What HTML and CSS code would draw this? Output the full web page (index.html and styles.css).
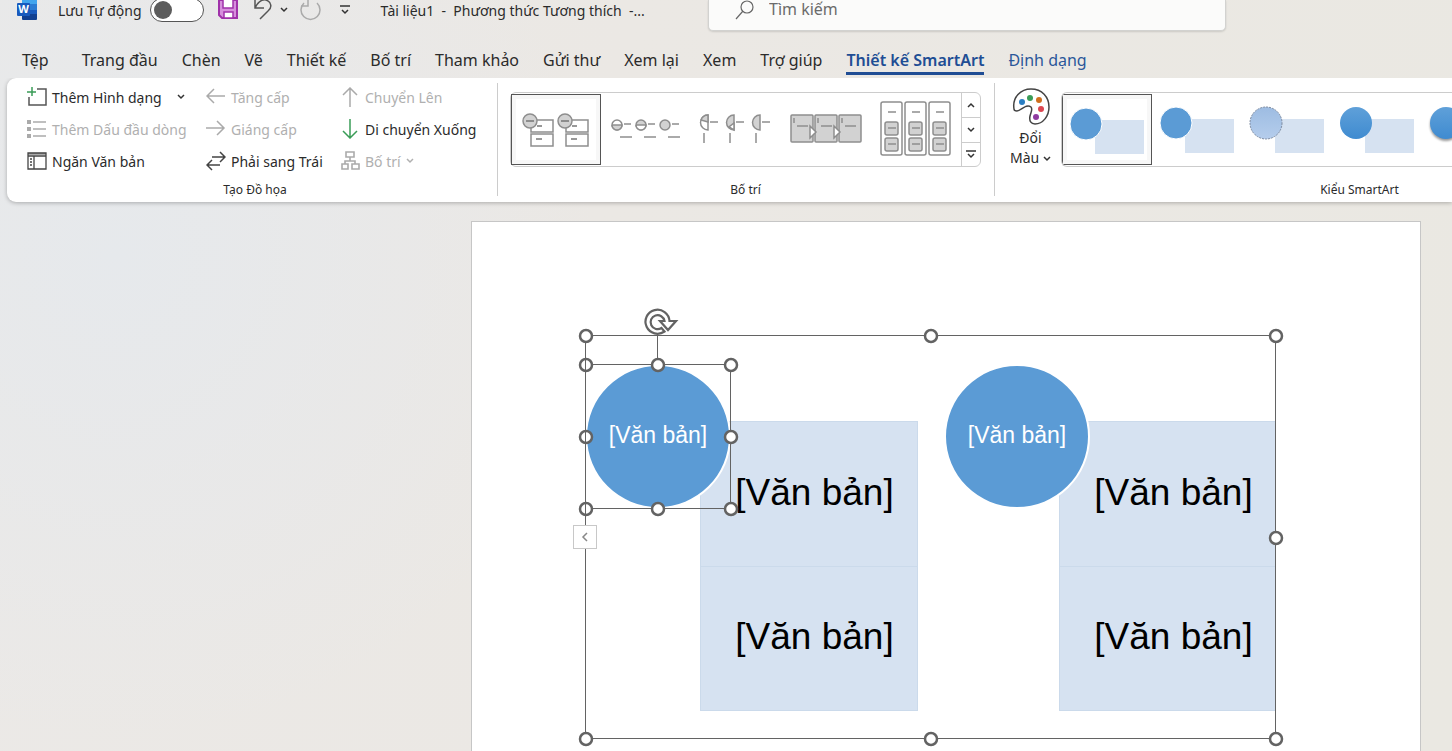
FILE: index.html
```html
<!DOCTYPE html>
<html lang="vi">
<head>
<meta charset="utf-8">
<title>Tài liệu1 - Word</title>
<link rel="stylesheet" href="styles.css">
</head>
<body>
<svg class="defs" width="0" height="0" aria-hidden="true">
  <defs>
    <linearGradient id="soft" x1="0" y1="0" x2="0" y2="1"><stop offset="0" stop-color="#9dbce2"/><stop offset="1" stop-color="#b5cdec"/></linearGradient>
    <linearGradient id="deep" x1="0" y1="0" x2="0" y2="1"><stop offset="0" stop-color="#5fa0d9"/><stop offset="1" stop-color="#3f8bd0"/></linearGradient>
    <g id="picture"><rect x="10" y="21" width="22" height="27" rx="1"/><path d="M13 24v5M16 32h11"/></g>
    <g id="column"><rect x="10" y="8" width="21" height="53" rx="2" fill="#fff"/><rect x="14" y="28" width="13" height="13" rx="2"/><rect x="14" y="44" width="13" height="13" rx="2"/><path d="M17 18h8M17 34h8M17 50h8"/></g>
    <g id="stack"><path fill="#fff" d="M20 25h22v12H20zM20 39h22v12H20z"/><circle cx="19" cy="26" r="7"/><path stroke="#777" d="M15 26h8M26 31h5M25 44h6"/></g>
  </defs>
</svg>

<header class="titlebar">
  <div class="quick">
    <svg class="word" width="21" height="22" viewBox="0 0 21 22"><path fill="#41a5ee" d="M5 0h15v6H5z"/><path fill="#2b7cd3" d="M5 5h15v6H5z"/><path fill="#185abd" d="M5 11h15v5H5z"/><path fill="#103f91" d="M5 15h15v5a1 1 0 0 1-1 1H6a1 1 0 0 1-1-1z"/><rect y="4" width="13" height="13" rx="1" fill="#185abd"/><text x="6.500" y="14" text-anchor="middle" class="mark">W</text></svg>
    <label class="autosave">Lưu Tự động <input type="checkbox" role="switch" class="switch"></label>
    <button class="tool" aria-label="Lưu"><svg width="20" height="22" viewBox="0 0 20 22"><path d="M1 1h18v18H4l-3-3z" fill="#d68fdc" stroke="#a032aa" stroke-width="2"/><path d="M5 0h10v9H5zM6 13h9v6H6z" fill="#fff" stroke="#a032aa" stroke-width="1.500"/></svg></button>
    <button class="tool undo" aria-label="Hoàn tác"><svg width="20" height="22" viewBox="0 0 20 22" fill="none" stroke="#555" stroke-width="1.500"><path d="M3 0v9h9M3 9c3-6 6-9 11-8 6 2 6 8 2 11l-8 8"/></svg><svg width="8" height="6" viewBox="0 0 8 6" fill="none" stroke="#333" stroke-width="1.500"><path d="M1 1l3 3 3-3"/></svg></button>
    <button class="tool redo" aria-label="Làm lại"><svg width="22" height="22" viewBox="0 0 22 22" fill="none" stroke="#aaa" stroke-width="1.500"><path d="M8 0v7H1M4 4a9.500 9.500 0 1 0 13 0"/></svg></button>
    <button class="tool more" aria-label="Tùy chỉnh"><svg width="10" height="10" viewBox="0 0 10 10" fill="none" stroke="#333" stroke-width="1.500"><path d="M0 1h10M2 5l3 3 3-3"/></svg></button>
    <span class="doc">Tài liệu1&nbsp; -&nbsp; Phương thức Tương thích&nbsp; -...</span>
  </div>
  <label class="search">
    <svg width="19" height="20" viewBox="0 0 19 20" fill="none" stroke="#666" stroke-width="1.200"><circle cx="12" cy="7" r="6"/><path d="M8 11l-7 8"/></svg>
    <input type="text" placeholder="Tìm kiếm" aria-label="Tìm kiếm">
  </label>
</header>

<nav class="tabs">
  <button class="tab file">Tệp</button><button class="tab">Trang đầu</button><button class="tab">Chèn</button><button class="tab">Vẽ</button><button class="tab">Thiết kế</button><button class="tab">Bố trí</button><button class="tab">Tham khảo</button><button class="tab">Gửi thư</button><button class="tab">Xem lại</button><button class="tab">Xem</button><button class="tab">Trợ giúp</button><button class="tab active">Thiết kế SmartArt</button><button class="tab context">Định dạng</button>
</nav>

<section class="ribbon">
  <div class="group create">
    <div class="commands">
      <button class="cmd"><svg width="20" height="20" viewBox="0 0 20 20" fill="none" stroke="#555" stroke-width="1.500"><path d="M10 2h9v16H2v-8"/><path stroke="#3a9c57" d="M0 5h9M5 0v9"/></svg><span>Thêm Hình dạng</span><svg class="caret" width="8" height="6" viewBox="0 0 8 6"><path d="M1 1l3 3 3-3"/></svg></button>
      <button class="cmd" disabled><svg width="20" height="20" viewBox="0 0 20 20" fill="none" stroke="#aaa" stroke-width="1.500"><path d="M6 3h13M6 10h13M6 17h13"/><path stroke-width="4" d="M0 3h4M0 10h4M0 17h4"/></svg><span>Thêm Dấu đầu dòng</span></button>
      <button class="cmd"><svg width="20" height="20" viewBox="0 0 20 20" fill="none" stroke="#444" stroke-width="1.300"><path stroke-width="2" stroke="#aaa" d="M1 3h18"/><path d="M1 2h18v16H1zM1 5h18M7 5v13"/><path d="M3 8h2M3 11h2M3 14h2"/></svg><span>Ngăn Văn bản</span></button>
    </div>
    <div class="commands">
      <button class="cmd" disabled><svg width="20" height="20" viewBox="0 0 20 20" fill="none" stroke="#aaa" stroke-width="1.500"><path d="M19 9H1M8 2L1 9l7 7"/></svg><span>Tăng cấp</span></button>
      <button class="cmd" disabled><svg width="20" height="20" viewBox="0 0 20 20" fill="none" stroke="#aaa" stroke-width="1.500"><path d="M0 9h18M11 2l7 7-7 7"/></svg><span>Giáng cấp</span></button>
      <button class="cmd"><svg width="20" height="20" viewBox="0 0 20 20" fill="none" stroke="#444" stroke-width="1.500"><path d="M6 6h13M14 1l5 5-5 5M14 14H1M6 9l-5 5 5 5"/></svg><span>Phải sang Trái</span></button>
    </div>
    <div class="commands">
      <button class="cmd" disabled><svg width="19" height="20" viewBox="0 0 19 20" fill="none" stroke="#aaa" stroke-width="1.500"><path d="M9 20V1M2 8l7-7 7 7"/></svg><span>Chuyển Lên</span></button>
      <button class="cmd"><svg width="19" height="20" viewBox="0 0 19 20" fill="none" stroke="#3a9c57" stroke-width="1.500"><path d="M9 0v19M2 12l7 7 7-7"/></svg><span>Di chuyển Xuống</span></button>
      <button class="cmd" disabled><svg width="19" height="20" viewBox="0 0 19 20" fill="none" stroke="#aaa" stroke-width="1.600"><path d="M5 1h8v5H5zM1 13h6v5H1zM11 13h7v5h-7zM9 6v4M4 13v-3h10v3"/></svg><span>Bố trí</span><svg class="caret near" width="8" height="6" viewBox="0 0 8 6"><path d="M1 1l3 3 3-3"/></svg></button>
    </div>
    <h2 class="title">Tạo Đồ họa</h2>
  </div>

  <div class="group layouts">
    <div class="gallery">
      <button class="thumb selected" aria-label="Bố trí 1"><svg width="90" height="70" viewBox="0 0 90 70"><use href="#stack"/><use href="#stack" x="35"/></svg></button>
      <button class="thumb" aria-label="Bố trí 2"><svg width="90" height="70" viewBox="0 0 90 70"><circle cx="16" cy="31" r="5" fill="#fff"/><path d="M11 31h10a5 5 0 0 1-10 0M23 30h7M19 43h12"/><circle cx="40" cy="31" r="5"/><path fill="#fff" d="M35 31h10a5 5 0 0 1-10 0"/><path d="M47 30h7M43 43h12"/><circle cx="64" cy="31" r="5"/><path d="M71 30h7M67 43h12"/></svg></button>
      <button class="thumb" aria-label="Bố trí 3"><svg width="90" height="70" viewBox="0 0 90 70"><path fill="#fff" d="M17 21a7.500 7.500 0 0 0 0 15z"/><path d="M17 28v-7a7.500 7.500 0 0 0-7 5zM19 28h8M13 39v10"/><path d="M43 21a7.500 7.500 0 0 0 0 15z"/><path fill="#fff" d="M43 29v7l-5-3z"/><path d="M45 28h8M39 39v10M69 21a7.500 7.500 0 0 0 0 15zM71 28h8M65 39v10"/></svg></button>
      <button class="thumb" aria-label="Bố trí 4"><svg width="90" height="70" viewBox="0 0 90 70"><use href="#picture"/><use href="#picture" x="24"/><use href="#picture" x="48"/><path fill="#fff" d="M29 32l6 6-6 6zM53 32l6 6-6 6z"/></svg></button>
      <button class="thumb" aria-label="Bố trí 5"><svg width="90" height="70" viewBox="0 0 90 70"><use href="#column"/><use href="#column" x="24"/><use href="#column" x="48"/></svg></button>
      <div class="scroller">
        <button aria-label="Lên"><svg class="caret" width="8" height="6" viewBox="0 0 8 6"><path d="M1 5l3-3 3 3"/></svg></button>
        <button aria-label="Xuống"><svg class="caret" width="8" height="6" viewBox="0 0 8 6"><path d="M1 1l3 3 3-3"/></svg></button>
        <button aria-label="Xem thêm"><svg class="caret" width="10" height="9" viewBox="0 0 10 9"><path d="M0 1h10M2 4l3 3 3-3"/></svg></button>
      </div>
    </div>
    <h2 class="title">Bố trí</h2>
  </div>

  <div class="group styles">
    <button class="colors">
      <svg width="38" height="38" viewBox="0 0 38 38"><path d="M2 21C0 9 9 1 19 1c11 0 18 8 18 18 0 9-6 17-14 17-4 0-6-3-5-8 1-4 3-7 1-9-5-4-10 4-14 4-2 0-3-1-3-2z" fill="#fff" stroke="#444" stroke-width="1.500"/><circle cx="10" cy="14" r="3" fill="#2b7fc3"/><circle cx="18" cy="10" r="3" fill="#3a9c57"/><circle cx="27" cy="12" r="3" fill="#cf6f1d"/><circle cx="29" cy="21" r="3" fill="#dc4650"/><circle cx="24" cy="29" r="3" fill="#8f3aa0"/></svg>
      <span>Đổi</span>
      <span>Màu <svg class="caret" width="8" height="6" viewBox="0 0 8 6"><path d="M1 1l3 3 3-3"/></svg></span>
    </button>
    <div class="gallery wide">
      <button class="thumb selected" aria-label="Kiểu 1"><svg width="90" height="70" viewBox="0 0 90 70"><path class="pane" d="M33 25h49v34H33z"/><circle class="dot" cx="24" cy="29" r="16"/></svg></button>
      <button class="thumb" aria-label="Kiểu 2"><svg width="90" height="70" viewBox="0 0 90 70"><path class="pane" d="M33 25h49v34H33z"/><circle class="dot" cx="24" cy="29" r="16"/></svg></button>
      <button class="thumb" aria-label="Kiểu 3"><svg width="90" height="70" viewBox="0 0 90 70"><path class="pane" d="M33 25h49v34H33z"/><circle class="dot soft" cx="24" cy="29" r="16"/></svg></button>
      <button class="thumb" aria-label="Kiểu 4"><svg width="90" height="70" viewBox="0 0 90 70"><path class="pane" d="M33 25h49v34H33z"/><circle class="dot deep" cx="24" cy="29" r="16"/></svg></button>
      <button class="thumb" aria-label="Kiểu 5"><svg width="90" height="70" viewBox="0 0 90 70"><path class="pane" d="M33 25h49v34H33z"/><circle class="dot deep shadow" cx="24" cy="29" r="16"/></svg></button>
    </div>
    <h2 class="title">Kiểu SmartArt</h2>
  </div>
</section>

<main class="workspace">
  <article class="page">
    <div class="diagram">
      <div class="clip">
        <div class="node first"><p>[Văn bản]</p><p>[Văn bản]</p></div>
        <div class="node second"><p>[Văn bản]</p><p>[Văn bản]</p></div>
        <div class="disc first">[Văn bản]</div>
        <div class="disc second">[Văn bản]</div>
      </div>
      <svg class="frame" width="720" height="448" viewBox="-15 -30 720 448">
        <path d="M-.5-.5H689.500V402.500H-.5zM-.5 28.500H144.500V172.500H-.5zM71.500 0V28" fill="none" stroke="#636363"/>
        <g fill="#fff" stroke="#636363" stroke-width="2.500">
          <circle cx="0" cy="0" r="6"/><circle cx="345" cy="0" r="6"/><circle cx="690" cy="0" r="6"/><circle cx="690" cy="202" r="6"/><circle cx="0" cy="403" r="6"/><circle cx="345" cy="403" r="6"/><circle cx="690" cy="403" r="6"/>
          <circle cx="72" cy="29" r="6"/><circle cx="145" cy="29" r="6"/><circle cx="145" cy="101" r="6"/><circle cx="72" cy="173" r="6"/><circle cx="145" cy="173" r="6"/>
          <circle cx="0" cy="29" r="6"/><circle cx="0" cy="101" r="6"/><circle cx="0" cy="173" r="6"/>
        </g>
        <path d="M-.5 23v12M-.5 95v12M-.5 167v12" stroke="#636363"/>
        <path d="M78.500-4.500A12 12 0 1 1 83.500-15H90L82-6l-8-9h4.500A7 7 0 1 0 75.500-8z" fill="#fff" stroke="#636363" stroke-width="2.200"/>
      </svg>
      <button class="toggle" aria-label="Mở ngăn văn bản"><svg width="8" height="12" viewBox="0 0 8 12" fill="none" stroke="#888" stroke-width="1.500"><path d="M6 2L2 6l4 4"/></svg></button>
    </div>
  </article>
</main>
</body>
</html>
```

FILE: styles.css
```css
* { box-sizing: border-box; }

body {
  margin: 0;
  height: 100vh;
  overflow: hidden;
  display: flex;
  flex-direction: column;
  font-family: "Noto Sans", "Open Sans", sans-serif;
  font-size: 14px;
  color: #2b2b2b;
  background:
    radial-gradient(circle at 8% 34%, #e6e9ec 0, rgba(230, 233, 236, 0) 34%),
    linear-gradient(100deg, #ebe9e7, #ebe8e4 40%, #eae8e2);
}

button { font: inherit; color: inherit; background: none; border: 0; padding: 0; }
svg { flex: none; display: block; }
.defs { position: absolute; }
.caret { fill: none; stroke: #333; stroke-width: 1.5; }

.titlebar { display: flex; align-items: flex-start; height: 42px; }
.quick { display: flex; align-items: center; height: 20px; width: 708px; padding-left: 17px; flex: none; white-space: nowrap; }
.mark { fill: #fff; font-size: 11px; font-weight: 700; }
.autosave { display: flex; align-items: center; gap: 8px; margin-left: 20px; }
.switch { appearance: none; margin: 0; width: 54px; height: 24px; border: 1px solid #555; border-radius: 12px; background: #fff; display: flex; align-items: center; padding-left: 3px; }
.switch::before { content: ""; width: 18px; height: 18px; border-radius: 50%; background: #5c5c5c; }
.tool { margin-left: 14px; display: flex; align-items: center; gap: 8px; }
.tool.redo { margin-left: 12px; }
.tool.more { margin-left: 18px; }
.doc { margin-left: 31px; }
.search { flex: 0 1 518px; height: 31px; display: flex; align-items: flex-start; gap: 15px; padding-left: 26px; background: #fbfbfa; border: 1px solid #d2d2d0; border-top: 0; border-radius: 0 0 5px 5px; box-shadow: 0 1px 2px #0002; }
.search input { flex: 1; height: 18px; border: 0; padding: 0; background: none; font: inherit; font-size: 16px; outline: 0; }
.search input::placeholder { color: #6b6b6b; opacity: 1; }

.tabs { display: flex; gap: 24px; height: 36px; padding-left: 22px; font-size: 16px; white-space: nowrap; }
.tab { height: 33px; padding-top: 5px; border-bottom: 3px solid transparent; }
.tab.file { margin-right: 9px; }
.tab.active { color: #204d94; font-weight: 600; border-color: #204d94; }
.tab.context { color: #2b579a; }

.ribbon { display: flex; height: 124px; margin-left: 7px; background: #fff; border-radius: 9px 0 0 9px; box-shadow: 0 1px 4px #0004; flex: none; overflow: hidden; clip-path: inset(0 0 -8px -8px); }
.group { position: relative; display: grid; grid-template-rows: 100px 22px; flex: none; }
.group + .group { border-left: 1px solid transparent; border-image: linear-gradient(transparent 6px, #ccc 6px, #ccc 117px, transparent 117px) 1; }
.title { grid-row: 2; grid-column: 1 / -1; margin: 0; text-align: center; font-size: 12px; font-weight: 400; line-height: 24px; }
.create { width: 490px; padding-left: 20px; grid-template-columns: 179px 135px 1fr; }
.create .title { margin-right: 14px; }
.commands { padding-top: 3px; display: flex; flex-direction: column; }
.cmd { display: flex; align-items: center; gap: 5px; height: 32px; white-space: nowrap; }
.cmd:disabled { color: #b0b0b0; }
.cmd:disabled .caret { stroke: #b0b0b0; }
.cmd svg + span + .caret { margin-left: 10px; }
.cmd svg + span + .near { margin-left: 0; }

.layouts { width: 497px; padding: 0 13px 0 12px; }
.gallery { display: flex; height: 75px; margin-top: 14px; border: 1px solid #ccc; border-radius: 6px; }
.thumb { width: 90px; height: 72px; flex: none; display: flex; align-items: center; justify-content: center; }
.thumb svg { fill: #d2d2d2; stroke: #8e8e8e; stroke-width: 1.5; }
.selected { height: 71px; margin-top: 1px; outline: 1px solid #555; outline-offset: -1px; box-shadow: inset 0 0 0 5px #f7f7f7; }
.scroller { flex: 1; display: grid; grid-template-rows: repeat(3, 1fr); border-left: 1px solid #ccc; }
.scroller button { display: grid; place-items: center; }
.scroller button + button { border-top: 1px solid #ccc; }

.styles { flex: 1; min-width: 0; grid-template-columns: 66px 1fr; }
.styles .title { margin-left: 272px; }
.colors { display: flex; flex-direction: column; align-items: center; padding: 10px 0 0 5px; line-height: 20px; }
.colors svg + span { margin-top: 2px; }
.colors .caret { display: inline-block; vertical-align: middle; }
.wide { border-right: 0; border-radius: 6px 0 0 6px; overflow: hidden; }
.thumb .pane { fill: #d6e2f1; stroke: none; }
.thumb .dot { fill: #5b9bd5; stroke: #fff; stroke-width: 1; }
.thumb .soft { fill: url(#soft); stroke: #7d8ba0; stroke-dasharray: 2 1; }
.thumb .deep { fill: url(#deep); stroke: none; }
.thumb .shadow { filter: drop-shadow(0 2px 1px #0006); }

.workspace { flex: 1; min-height: 0; display: flex; padding: 19px 31px 0 471px; }
.page { flex: 1; background: #fff; border: 1px solid #c6c6c6; border-bottom: 0; padding: 114px 0 0 114px; }
.diagram { position: relative; width: 690px; height: 403px; font-family: "Liberation Sans", Arial, sans-serif; }
.clip { position: absolute; inset: 0; overflow: hidden; }
.node { position: absolute; top: 85px; width: 218px; height: 290px; display: grid; grid-template-rows: 1fr 1fr; background: #d6e2f1; border: 1px solid #cbdaeb; color: #000; font-size: 37px; }
.node p { margin: 0; padding: 0 0 3px 11px; display: grid; place-items: center; }
.node p + p { border-top: 1px solid #cbdaeb; }
.node.first { left: 114px; }
.node.second { left: 473px; }
.disc { position: absolute; top: 28px; width: 146px; height: 145px; border: 2px solid #fff; border-radius: 50%; background: #5b9bd5; color: #fff; font-size: 23px; display: grid; place-items: center; padding-bottom: 3px; }
.disc.first { left: -1px; }
.disc.second { left: 358px; }
.frame { position: absolute; left: -15px; top: -30px; }
.toggle { position: absolute; left: -13px; top: 189px; width: 24px; height: 24px; display: grid; place-items: center; background: #fff; border: 1px solid #c8c8c8; }
```
